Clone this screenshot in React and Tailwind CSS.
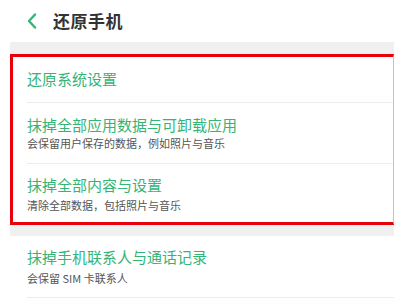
import React from 'react';

const font = { fontFamily: '"Noto Sans CJK SC", "Noto Sans", sans-serif' };

const App = () => {
  return (
    <div className="w-[394px] h-[304px] overflow-hidden bg-white" style={font}>
      {/* header */}
      <div className="h-[42px] flex items-center pl-[27px]">
        <svg width="10" height="16" viewBox="0 0 10 16" className="mr-[16px]">
          <path d="M8 1.5 L2 8 L8 14.5" fill="none" stroke="#35b477" strokeWidth="2.4" strokeLinecap="round" strokeLinejoin="round" />
        </svg>
        <span className="text-[17px] font-semibold text-[#333] tracking-[0.5px]">还原手机</span>
      </div>

      <div className="ml-[10px] bg-[#f0f0f0] pt-[12px]">
        {/* highlighted group */}
        <div className="bg-white border-[3px] border-r-[1px] border-[#e8000b] border-r-[#f6b0b0]">
          <div className="pl-[14px]">
            <div className="pt-[12px] pb-[13px] border-b border-[#ececec] text-[15px] leading-[20px] text-[#35b477]">还原系统设置</div>
          </div>
          <div className="pl-[14px]">
            <div className="pt-[12px] pb-[12px] border-b border-[#ececec]">
              <div className="text-[15px] leading-[20px] text-[#35b477]">抹掉全部应用数据与可卸载应用</div>
              <div className="mt-[1px] text-[11px] leading-[15px] text-[#555]">会保留用户保存的数据，例如照片与音乐</div>
            </div>
          </div>
          <div className="pl-[14px]">
            <div className="pt-[11px] pb-[9px]">
              <div className="text-[15px] leading-[20px] text-[#35b477]">抹掉全部内容与设置</div>
              <div className="mt-[3px] text-[11px] leading-[15px] text-[#555]">清除全部数据，包括照片与音乐</div>
            </div>
          </div>
        </div>

        <div className="h-[11px]" />

        <div className="bg-white pl-[17px]">
          <div className="pt-[11px] pb-[11px] border-b border-[#ececec]">
            <div className="text-[15px] leading-[20px] text-[#35b477]">抹掉手机联系人与通话记录</div>
            <div className="mt-[4px] text-[11px] leading-[15px] text-[#555]">会保留 SIM 卡联系人</div>
          </div>
          <div className="h-[20px]" />
        </div>
      </div>
    </div>
  );
};

export default App;
